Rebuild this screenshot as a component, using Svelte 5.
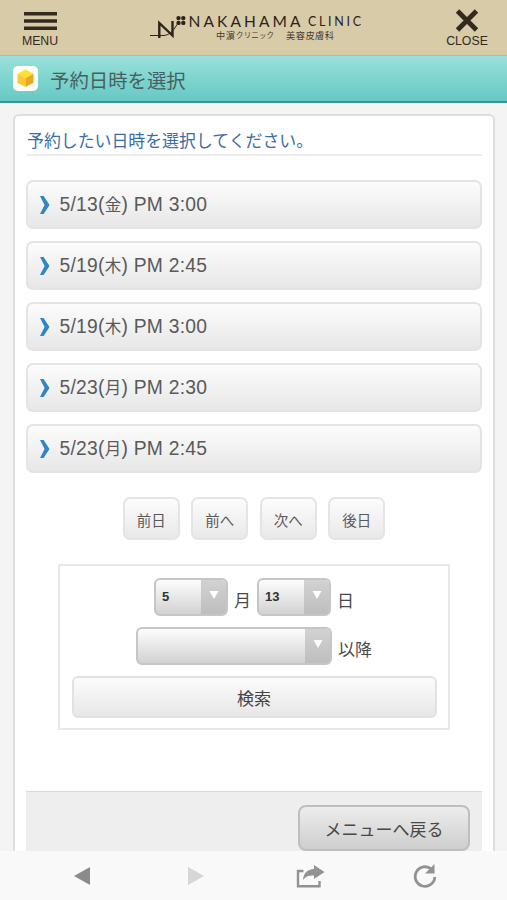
<script lang="ts">
	const slots = [
		{ date: '5/13', dow: '金', time: 'PM 3:00' },
		{ date: '5/19', dow: '木', time: 'PM 2:45' },
		{ date: '5/19', dow: '木', time: 'PM 3:00' },
		{ date: '5/23', dow: '月', time: 'PM 2:30' },
		{ date: '5/23', dow: '月', time: 'PM 2:45' }
	];
	const pagers = ['前日', '前へ', '次へ', '後日'];

	let month = $state('5');
	let day = $state('13');
	let time = $state('');
</script>

{#snippet dropdown(value: string, wide: boolean)}
	<button class="select" class:wide>
		<span class="select-value">{value}</span>
		<span class="select-arrow">
			<svg width="10" height="8" viewBox="0 0 10 8"><path d="M.5 0h9L5 8z" fill="#fff" /></svg>
		</span>
	</button>
{/snippet}

<div class="screen">
	<!-- Header -->
	<header class="site-header">
		<button class="head-btn menu">
			<svg width="33" height="18" viewBox="0 0 33 18">
				<path d="M0 1.7h33M0 9h33M0 16.3h33" stroke="#33291f" stroke-width="3.4" />
			</svg>
			<span>MENU</span>
		</button>
		<svg class="logo" width="214" height="30" viewBox="0 0 214 30">
			<g fill="none" stroke="#2c231b">
				<path d="M9.3 26V11L22.5 23.500V9" stroke-width="2.4" />
				<path d="M0 23.500h13c6 0 10-4 14-11" stroke-width="1" />
			</g>
			<g fill="#2c231b">
				<circle cx="28.5" cy="6.1" r="2.2" />
				<circle cx="33.3" cy="6.1" r="2.2" />
				<circle cx="28.5" cy="10.9" r="2.2" />
				<circle cx="33.3" cy="10.9" r="2.2" />
				<text class="logo-main" x="38.5" y="15.3" textLength="112">NAKAHAMA</text>
				<text class="logo-side" x="158" y="14.3" textLength="53">CLINIC</text>
				<text class="logo-sub" x="66" y="26.8" textLength="19">中濵</text>
				<text class="logo-sub kana" x="86" y="26.3" textLength="38">クリニック</text>
				<text class="logo-sub" x="136" y="26.8" textLength="48">美容皮膚科</text>
			</g>
		</svg>
		<button class="head-btn close">
			<svg width="24" height="23" viewBox="0 0 24 23">
				<path d="M2.5 2l19 19M21.5 2l-19 19" stroke="#33291f" stroke-width="4.8" />
			</svg>
			<span>CLOSE</span>
		</button>
	</header>

	<div class="title-bar">
		<svg class="cube" width="25" height="25" viewBox="0 0 25 25">
			<rect width="25" height="25" rx="5" fill="#fffef6" />
			<path d="M12.5 3.5l8 4.2-8 4.3-8-4.3z" fill="#fbe32b" />
			<path d="M4.5 7.7l8 4.3v9l-8-4.2z" fill="#f9c83b" />
			<path d="M20.5 7.7l-8 4.3v9l8-4.2z" fill="#e9a91f" />
		</svg>
		<h1>予約日時を選択</h1>
	</div>

	<!-- Content -->
	<main class="card">
		<h2>予約したい日時を選択してください。</h2>

		<ul class="slots">
			{#each slots as slot}
				<li>
					<svg width="10" height="18" viewBox="0 0 10 18">
						<path d="M0 0h3.6L9.5 9 3.6 18H0l4.6-9z" fill="#2f86c1" />
					</svg>
					<span>{slot.date}(<i>{slot.dow}</i>) {slot.time}</span>
				</li>
			{/each}
		</ul>

		<div class="pager">
			{#each pagers as label}
				<button>{label}</button>
			{/each}
		</div>

		<section class="search">
			<div class="search-row">
				{@render dropdown(month, false)}
				<span class="unit">月</span>
				{@render dropdown(day, false)}
				<span class="unit">日</span>
			</div>
			<div class="search-row second">
				{@render dropdown(time, true)}
				<span class="unit">以降</span>
			</div>
			<button class="search-btn">検索</button>
		</section>

		<div class="back-area">
			<button class="back-btn">メニューへ戻る</button>
		</div>
	</main>

	<!-- Browser toolbar -->
	<nav class="toolbar">
		<svg width="16" height="18" viewBox="0 0 16 18"><path d="M16 0v18L0 9z" fill="#8b8b8b" /></svg>
		<svg width="16" height="18" viewBox="0 0 16 18"><path d="M0 0v18l16-9z" fill="#d6d6d6" /></svg>
		<svg width="29" height="23" viewBox="0 0 29 23">
			<path d="M7.5 6H2v15.2h21.5V16" fill="none" stroke="#929292" stroke-width="2.4" />
			<path d="M18 0l10.5 7L18 14v-3.500c-5 0-8 .5-11 4.500 .5-7 4.500-10.500 11-11z" fill="#929292" />
		</svg>
		<svg width="24" height="24" viewBox="0 0 24 24">
			<path d="M18.5 5.2A9.8 9.800 0 1 0 21.8 13" fill="none" stroke="#929292" stroke-width="2.8" />
			<path d="M21.5 0v9.500H12z" fill="#929292" />
		</svg>
	</nav>
</div>

<style>
	:global(body) {
		margin: 0;
	}

	.screen {
		height: 900px;
		display: flex;
		flex-direction: column;
		overflow: hidden;
		background: #f4f4f4;
		color: #5a5a5a;
		font-family: 'Liberation Sans', 'Noto Sans CJK JP', sans-serif;
	}

	button {
		box-sizing: border-box;
		margin: 0;
		padding: 0;
		border: 0;
		background: none;
		color: inherit;
		font-family: inherit;
	}

	svg {
		display: block;
		flex-shrink: 0;
	}

	/* ── Header ── */
	.site-header {
		height: 56px;
		box-sizing: border-box;
		flex-shrink: 0;
		display: flex;
		justify-content: space-between;
		align-items: flex-start;
		padding: 0 19px 0 22px;
		background: #d8cba8;
		border-bottom: 1px solid #b2b9a5;
	}

	.head-btn {
		display: flex;
		flex-direction: column;
		align-items: center;
		color: #33291f;
		font-size: 12.3px;
		line-height: 14px;
	}

	.menu {
		width: 36px;
		padding-top: 12px;
		gap: 4px;
	}

	.close {
		width: 42px;
		padding-top: 9px;
		gap: 2px;
	}

	.logo {
		margin: 12px 0 0 9px;
	}

	.logo-main {
		font: 15.5px Lato, sans-serif;
	}

	.logo-side {
		font: 12.5px Lato, sans-serif;
	}

	.logo-sub {
		font: 9.2px 'Liberation Serif', 'Noto Sans CJK JP', serif;
		opacity: 0.85;
	}

	.logo-sub.kana {
		font-size: 7.5px;
	}

	/* ── Title bar ── */
	.title-bar {
		height: 47px;
		box-sizing: border-box;
		flex-shrink: 0;
		display: flex;
		align-items: center;
		gap: 12px;
		padding: 0 13px 1px;
		background: linear-gradient(#9ce0dd, #7fd5ce 50%, #66c8c6);
		border-bottom: 2px solid #3b918b;
	}

	h1 {
		margin: 6px 0 0;
		color: #47605f;
		font-size: 19.4px;
		font-weight: 400;
		line-height: 28px;
	}

	/* ── Card ── */
	.card {
		flex: 1;
		min-height: 0;
		display: flex;
		flex-direction: column;
		box-sizing: border-box;
		margin: 11px 12px 0 13px;
		padding: 14px 11px 0;
		background: #fff;
		border: 2px solid #dedede;
		border-bottom: 0;
		border-radius: 6px 6px 0 0;
	}

	h2 {
		margin: 0 0 0 1px;
		border-bottom: 2px solid #ececec;
		color: #3b6da4;
		font-size: 16.9px;
		font-weight: 400;
		line-height: 24px;
		white-space: nowrap;
	}

	.slots {
		display: flex;
		flex-direction: column;
		gap: 12px;
		margin: 24px 0 0;
		padding: 0;
		list-style: none;
	}

	.slots li {
		height: 49px;
		box-sizing: border-box;
		display: flex;
		align-items: center;
		gap: 9.5px;
		padding: 0 12px;
		border: 2px solid #e4e4e4;
		border-radius: 7px;
		background: linear-gradient(#fcfcfc, #e7e7e7);
		font-size: 19.3px;
		line-height: 28px;
		letter-spacing: 0.25px;
	}

	.slots i {
		font-size: 16.5px;
		font-style: normal;
	}

	.slots li span {
		padding-top: 1px;
	}

	/* ── Pager ── */
	.pager {
		display: flex;
		justify-content: center;
		gap: 11.5px;
		margin-top: 24px;
	}

	.pager button {
		width: 57px;
		height: 43px;
		padding-top: 1px;
		border: 2px solid #e4e4e4;
		border-radius: 7px;
		background: linear-gradient(#fcfcfc, #e9e9e9);
		font-size: 14.5px;
	}

	/* ── Search ── */
	.search {
		display: flex;
		flex-direction: column;
		align-items: center;
		width: 392px;
		height: 167px;
		box-sizing: border-box;
		margin: 24px auto 0;
		padding: 12px 12px 0;
		border: 2px solid #e8e8e8;
	}

	.search-row {
		display: flex;
		align-items: flex-end;
		gap: 6px;
	}

	.search-row.second {
		margin-top: 11px;
	}

	.unit {
		color: #4a4a4a;
		font-size: 17px;
		line-height: 25px;
		margin-bottom: 2px;
	}

	.select {
		display: flex;
		width: 74px;
		height: 38px;
		overflow: hidden;
		border: 2px solid #c6c6c6;
		border-radius: 6px;
		background: linear-gradient(#fdfdfd, #d2d2d2);
	}

	.select.wide {
		width: 196px;
	}

	.select-value {
		flex: 1;
		padding-left: 6px;
		color: #333;
		font-size: 13px;
		font-weight: 700;
		line-height: 34px;
		text-align: left;
	}

	.select-arrow {
		width: 25px;
		height: 100%;
		box-sizing: border-box;
		display: flex;
		justify-content: center;
		padding-top: 11px;
		background: linear-gradient(#d2d2d2, #bebebe);
	}

	.search-btn {
		width: 365px;
		height: 42px;
		flex-shrink: 0;
		margin-top: 11px;
		border: 2px solid #e2e2e2;
		border-radius: 6px;
		background: linear-gradient(#fcfcfc, #e7e7e7);
		color: #444;
		font-size: 17px;
	}

	/* ── Back ── */
	.back-area {
		flex: 1;
		display: flex;
		justify-content: flex-end;
		align-items: flex-start;
		margin-top: 61px;
		padding: 13px 12px 0 0;
		border-top: 1px solid #d9d9d9;
		background: #eee;
	}

	.back-btn {
		width: 172px;
		height: 46px;
		flex-shrink: 0;
		border: 2px solid #bebebe;
		border-radius: 8px;
		background: linear-gradient(#ededed, #cecece);
		color: #484848;
		font-size: 17px;
	}

	/* ── Toolbar ── */
	.toolbar {
		position: relative;
		height: 49px;
		flex-shrink: 0;
		box-sizing: border-box;
		display: grid;
		grid-template-columns: 114px 108px 117px 24px;
		align-items: center;
		padding: 1px 0 0 74px;
		background: #f9f9f9;
	}
</style>
